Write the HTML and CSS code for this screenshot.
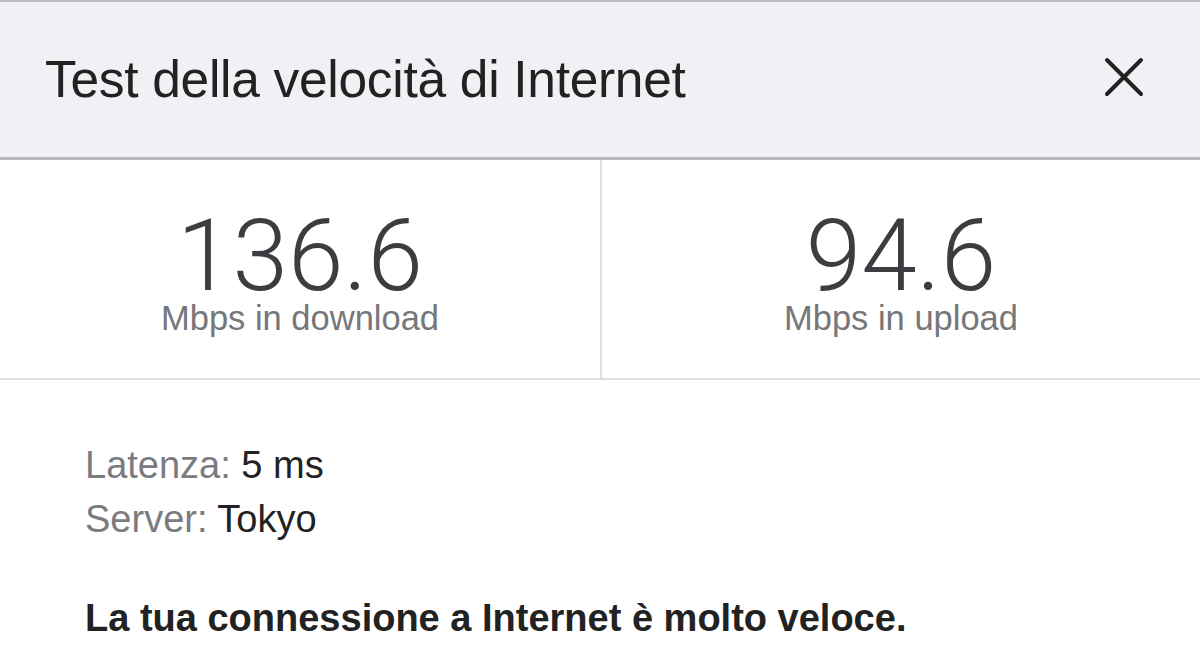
FILE: index.html
```html
<!DOCTYPE html>
<html lang="it">
<head>
    <meta charset="UTF-8">
    <meta name="viewport" content="width=device-width, initial-scale=1.0">
    <title>Test della velocità di Internet</title>
    <link rel="stylesheet" href="styles.css">
</head>
<body>
    <div class="card">
        <div class="header">
            <h1>Test della velocità di Internet</h1>
            <button class="close" aria-label="Chiudi">
                <svg width="40" height="40" viewBox="0 0 40 40">
                    <path d="M3 3 L37 37 M37 3 L3 37" stroke="#222" stroke-width="4" stroke-linecap="round"/>
                </svg>
            </button>
        </div>

        <div class="stats">
            <div class="stat">
                <div class="value">136.6</div>
                <div class="unit">Mbps in download</div>
            </div>
            <div class="stat">
                <div class="value">94.6</div>
                <div class="unit">Mbps in upload</div>
            </div>
        </div>

        <div class="details">
            <p class="row"><span class="label">Latenza:</span> 5 ms</p>
            <p class="row"><span class="label">Server:</span> Tokyo</p>
            <p class="summary">La tua connessione a Internet è molto veloce.</p>
        </div>
    </div>
</body>
</html>
```

FILE: styles.css
```css
body {
    margin: 0;
    font-family: "Liberation Sans", Arial, sans-serif;
    background-color: #fff;
    color: #222;
}
.card {
    width: 1200px;
    height: 665px;
    overflow: hidden;
}
.header {
    display: flex;
    align-items: center;
    justify-content: space-between;
    height: 160px;
    padding: 0 56px 0 45px;
    background-color: #f0f1f4;
    border-top: 2px solid #bdbdc1;
    border-bottom: 3px solid #b9b9bd;
    box-sizing: border-box;
}
.header h1 {
    margin: 0 0 2px 0;
    font-size: 51.5px;
    font-weight: normal;
    color: #222;
    letter-spacing: -0.3px;
}
.close {
    display: flex;
    padding: 0;
    border: none;
    background: none;
    margin-top: -5px;
}
.stats {
    display: grid;
    grid-template-columns: 1fr 1fr;
    height: 220px;
    border-bottom: 2px solid #dedede;
    box-sizing: border-box;
}
.stat {
    display: flex;
    flex-direction: column;
    align-items: center;
    padding-top: 54px;
}
.stat + .stat {
    border-left: 2px solid #dedede;
}
.value {
    font-family: Roboto, "Liberation Sans", sans-serif;
    font-weight: 300;
    font-size: 100px;
    line-height: 84px;
    color: #3c3d40;
}
.unit {
    font-size: 34.5px;
    line-height: 40px;
    color: #76777b;
}
.details {
    padding: 58px 85px 0 85px;
}
.row {
    margin: 0;
    font-size: 38px;
    line-height: 54px;
    color: #222;
}
.label {
    color: #7b7b7f;
}
.summary {
    margin: 51px 0 0 0;
    font-size: 38px;
    font-weight: bold;
    color: #222;
}
```
